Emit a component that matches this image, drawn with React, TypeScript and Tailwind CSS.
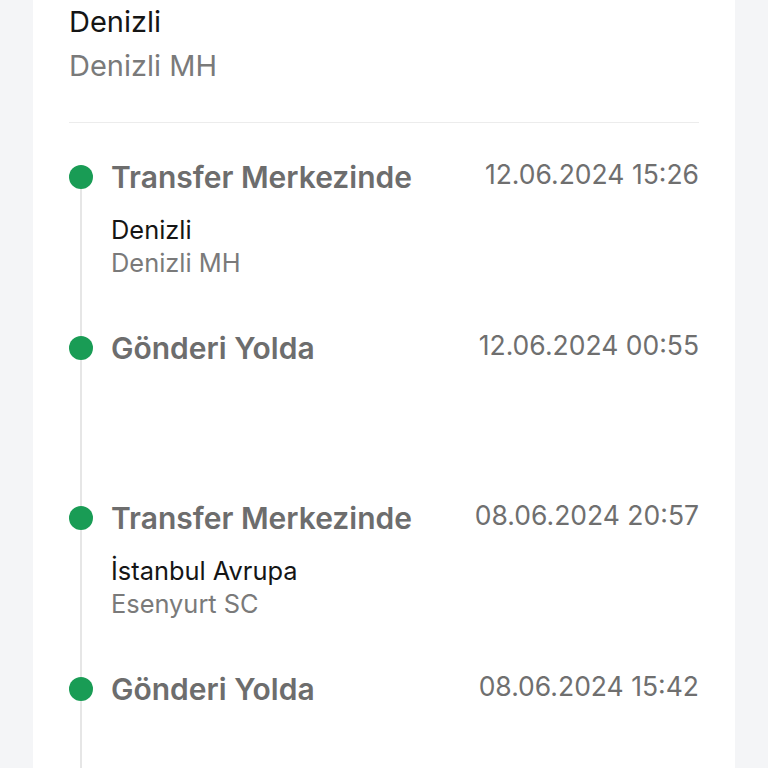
import React from "react";

type Item = { title: string; date: string; city?: string; branch?: string };

const items: Item[] = [
  { title: "Transfer Merkezinde", date: "12.06.2024 15:26", city: "Denizli", branch: "Denizli MH" },
  { title: "Gönderi Yolda", date: "12.06.2024 00:55" },
  { title: "Transfer Merkezinde", date: "08.06.2024 20:57", city: "İstanbul Avrupa", branch: "Esenyurt SC" },
  { title: "Gönderi Yolda", date: "08.06.2024 15:42" },
];

export default function App() {
  return (
    <div
      className="h-[768px] overflow-hidden bg-[#f4f5f7] px-[33px]"
      style={{ fontFamily: "Inter, 'Noto Sans', sans-serif" }}
    >
      <div className="h-[768px] overflow-hidden bg-white px-[36px]">
        <div className="text-[29px] leading-[44px] text-[#151515]">Denizli</div>
        <div className="text-[29px] leading-[44px] text-[#7a7a7a]">Denizli MH</div>
        <div className="mt-[34px] border-t border-[#ececec]" />
        <div className="mt-[42px]">
          {items.map((it, i) => (
            <div key={i} className="flex h-[170.6px]">
              <div className="flex w-[24px] flex-col items-center">
                <div className="h-[24px] w-[24px] shrink-0 rounded-full bg-[#199c55]" />
                <div className="w-[2px] flex-1 bg-[#e6e6e6]" />
              </div>
              <div className="ml-[18px] flex-1">
                <div className="flex h-[24px] items-center justify-between">
                  <span className="text-[30px] font-semibold leading-[24px] text-[#6d6d6d]">{it.title}</span>
                  <span className="relative -top-[3px] text-[26.5px] leading-[24px] text-[#6f6f6f]">{it.date}</span>
                </div>
                {it.city && (
                  <div className="mt-[24px]">
                    <div className="text-[25.4px] leading-[33px] text-[#151515]">{it.city}</div>
                    <div className="text-[25.4px] leading-[33px] text-[#7a7a7a]">{it.branch}</div>
                  </div>
                )}
              </div>
            </div>
          ))}
        </div>
      </div>
    </div>
  );
}
